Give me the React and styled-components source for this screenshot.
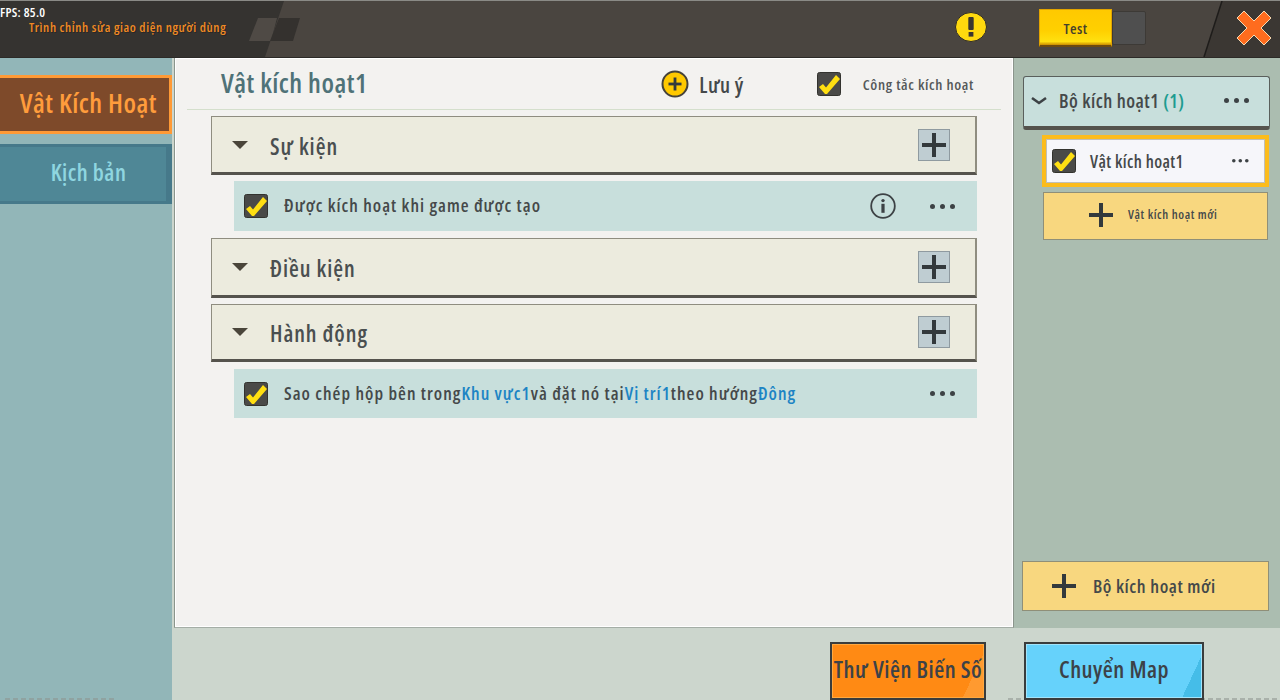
import React from 'react';
import styled, { createGlobalStyle } from 'styled-components';

const GlobalStyle = createGlobalStyle`
  html, body { margin: 0; height: 100%; overflow: hidden; }
  body { font-family: "Open Sans", "Noto Sans", sans-serif; font-stretch: 75%; font-weight: 600; letter-spacing: 0.03em; color: #45494a; }
  * { box-sizing: border-box; }
`;

const Page = styled.div`
  position: relative;
  width: 1280px;
  height: 700px;
  display: grid;
  grid-template-rows: 58px 570px 72px;
  grid-template-columns: 172px 1fr;
  background: #ccd6cd;
  overflow: hidden;
`;

const Header = styled.header`
  grid-column: 1 / 3;
  position: relative;
  display: flex;
  align-items: center;
  background: #4a4540;
  border-bottom: 1px solid #2c2a27;
  border-top: 1px solid #8a8a86;
`;

const HeaderArt = styled.svg`
  position: absolute;
  inset: 0;
`;

const Fps = styled.span`
  position: absolute;
  left: 0;
  top: 3px;
  font-size: 13px;
  line-height: 16px;
  letter-spacing: 0.3px;
  color: #fff;
`;

const HeaderTitle = styled.span`
  position: relative;
  margin: -4px 0 0 29px;
  font-size: 13px;
  letter-spacing: 0.58px;
  color: #f08a24;
  text-shadow: 1px 1px 0 #2a2724;
`;

const HeaderRight = styled.div`
  position: relative;
  margin: -2px 0 0 auto;
  display: flex;
  align-items: center;
  padding-right: 7px;
`;

const WarningSlot = styled.div`
  display: flex;
  margin-top: -2px;
`;

const Toggle = styled.div`
  display: flex;
  align-items: center;
  margin: 0 89px 0 52px;
`;

const ToggleOn = styled.div`
  width: 73px;
  height: 38px;
  display: flex;
  align-items: center;
  justify-content: center;
  font-size: 15px;
  color: #45402c;
  background: linear-gradient(180deg, #ffc900 0%, #ffd000 60%, #ffe010 90%, #c98a00 100%);
  border: 1px solid #e2a400;
  border-bottom: 2px solid #6b4a10;
`;

const ToggleOff = styled.div`
  width: 34px;
  height: 34px;
  background: #4f4f4f;
  border: 1px solid #3d3a36;
  border-radius: 2px;
`;

const Sidebar = styled.nav`
  grid-row: 2 / 4;
  background: #92b6b8;
  padding-top: 17px;
  display: flex;
  flex-direction: column;
  gap: 10px;
`;

const SideTab = styled.div`
  height: ${p => (p.$active ? 59 : 60)}px;
  display: flex;
  align-items: center;
  justify-content: ${p => (p.$active ? 'flex-end' : 'center')};
  padding: ${p => (p.$active ? '0 12px 4px 0' : '0 0 5px 11px')};
  white-space: nowrap;
  font-size: ${p => (p.$active ? 27 : 23)}px;
  color: ${p => (p.$active ? '#ff9c3c' : '#8fd6e0')};
  background: ${p => (p.$active ? '#7e4a2a' : '#4f8796')};
  border: ${p => (p.$active ? '3px solid #ff9a36' : '3px solid #46798a')};
  border-left: 0;
  border-right-width: ${p => (p.$active ? 3 : 6)}px;
`;

const Body = styled.div`
  display: grid;
  grid-template-columns: 842px 1fr;
`;

const Main = styled.main`
  margin-left: 2px;
  background: #f3f2f0;
  border: 1px solid #8b958c;
  border-top: 0;
  border-bottom-color: #a4aea6;
  box-shadow: inset 0 0 0 1px #fff;
  display: flex;
  flex-direction: column;
`;

const TitleRow = styled.div`
  height: 52px;
  margin: 0 12px;
  padding: 0 27px 0 34px;
  border-bottom: 1px solid #d4dfcc;
  display: flex;
  align-items: center;
`;

const Title = styled.h1`
  margin: -3px 0 0;
  font-size: 27px;
  font-weight: 600;
  color: #4f7278;
`;

const Note = styled.div`
  margin-left: auto;
  display: flex;
  align-items: center;
  gap: 10px;
  font-size: 21px;
  color: #45494a;
`;

const NoteLabel = styled.span`
  margin-top: 3px;
`;

const Switch = styled.div`
  margin-left: 73px;
  display: flex;
  align-items: center;
  gap: 22px;
  font-size: 15px;
  letter-spacing: 0.65px;
  color: #55595a;
`;

const Sections = styled.div`
  padding: 6px 36px 0 36px;
  display: flex;
  flex-direction: column;
`;

const SectionHead = styled.div`
  height: ${p => p.$h}px;
  margin-top: ${p => p.$top}px;
  padding: 0 25px 0 20px;
  display: flex;
  align-items: center;
  background: #ecebde;
  border: 1px solid #8f8d80;
  border-bottom: 3px solid #55534d;
  border-right-width: 2px;
`;

const Caret = styled.span`
  width: 0;
  height: 0;
  border-left: 8px solid transparent;
  border-right: 8px solid transparent;
  border-top: 8px solid #4a453a;
  margin-right: 22px;
`;

const SectionName = styled.span`
  margin-top: 3px;
  font-size: 22.5px;
  letter-spacing: 0.95px;
  color: #4a4f50;
`;

const AddBox = styled.div`
  margin-left: auto;
  width: 32px;
  height: 32px;
  display: flex;
  align-items: center;
  justify-content: center;
  background: #bfcdd2;
  border: 1px solid #8f9aa0;
`;

const Row = styled.div`
  height: ${p => p.$h}px;
  margin: ${p => p.$top}px 0 0 23px;
  padding: 0 22px 0 10px;
  display: flex;
  align-items: center;
  background: #c8dfdc;
  font-size: 18px;
  letter-spacing: 1.03px;
  color: #45494a;
`;

const RowText = styled.span`
  margin: -2px 0 0 16px;
`;

const Link = styled.span`
  color: #1c84c4;
`;

const RowEnd = styled.div`
  margin-left: auto;
  display: flex;
  align-items: center;
  gap: 34px;
`;

const Aside = styled.aside`
  background: #abbdb0;
  padding: 18px 11px 17px 9px;
  display: flex;
  flex-direction: column;
`;

const Group = styled.div`
  height: 54px;
  display: flex;
  align-items: center;
  padding: 0 20px 2px 6px;
  background: #c8dfdc;
  border: 1px solid #5a5f5c;
  border-bottom: 4px solid #55534d;
  border-radius: 3px;
  font-size: 19px;
  color: #45494a;
  margin-right: -1px;
`;

const GroupName = styled.span`
  margin-left: 11px;
`;

const Count = styled.span`
  color: #1d9c90;
`;

const Push = styled.div`
  margin-left: auto;
  display: flex;
`;

const Trigger = styled.div`
  height: 52px;
  margin: 5px 0 0 19px;
  padding: 0 16px 0 6px;
  display: flex;
  align-items: center;
  background: #f6f6fa;
  border: 4px solid #fcbc1c;
  box-shadow: inset 0 0 0 1px #c0bfb8;
  font-size: 17px;
  letter-spacing: 0.4px;
`;

const TriggerName = styled.span`
  margin-left: 14px;
`;

const NewButton = styled.div`
  flex: none;
  height: ${p => p.$h}px;
  margin: ${p => p.$margin};
  display: flex;
  align-items: center;
  padding: 0 0 ${p => p.$lift}px ${p => p.$pad}px;
  gap: ${p => p.$gap}px;
  font-size: ${p => p.$size}px;
  letter-spacing: 0.6px;
  color: #45494a;
  background: #f8d77f;
  border: 1px solid #8f8f78;
`;

const Footer = styled.footer`
  grid-column: 2;
  display: flex;
  justify-content: flex-end;
  align-items: flex-start;
  padding: 14px 76px 0 0;
  gap: 38px;
`;

const BigButton = styled.div`
  position: relative;
  z-index: 1;
  width: ${p => p.$w}px;
  height: 58px;
  display: flex;
  align-items: center;
  justify-content: center;
  padding-bottom: 4px;
  font-size: 23px;
  white-space: nowrap;
  color: #3c4248;
  border: 2px solid #3a3c3c;
  background: ${p => p.$bg};
  box-shadow: inset 0 0 0 1px ${p => p.$edge};
`;

const EdgeNoise = styled.div`
  position: absolute;
  bottom: 0;
  left: ${p => p.$left}px;
  width: ${p => p.$w}px;
  height: 2px;
  opacity: 0.55;
  background: repeating-linear-gradient(90deg, #8d938e 0 5px, transparent 5px 8px);
`;

const Check = () => (
  <svg width="24" height="24" viewBox="0 0 24 24">
    <rect x="0.5" y="0.5" width="23" height="23" rx="2" fill="#4a4a48" stroke="#33332f" />
    <path d="M2 15l4-3 3 3.5L19 3l4 4-13 15H8z" fill="#ffdf12" />
  </svg>
);

const Plus = ({ size = 24, width = 4, color = '#33393c' }) => (
  <svg width={size} height={size} viewBox="0 0 24 24">
    <rect x="0" y={12 - width / 2} width="24" height={width} fill={color} />
    <rect x={12 - width / 2} y="0" width={width} height="24" fill={color} />
  </svg>
);

const Dots = ({ gap = 10, r = 2.5 }) => (
  <svg width={gap * 2 + r * 2} height={r * 2} viewBox={`0 0 ${gap * 2 + r * 2} ${r * 2}`}>
    {[0, 1, 2].map(i => (
      <circle key={i} cx={r + i * gap} cy={r} r={r} fill="#3d4245" />
    ))}
  </svg>
);

const Info = () => (
  <svg width="26" height="26" viewBox="0 0 26 26">
    <circle cx="13" cy="13" r="11.8" fill="none" stroke="#3d4245" strokeWidth="1.8" />
    <circle cx="13" cy="7.6" r="1.7" fill="#3d4245" />
    <rect x="11.4" y="10.8" width="3.2" height="9" fill="#3d4245" />
  </svg>
);

const Warning = () => (
  <svg width="32" height="30" viewBox="0 0 32 30">
    <ellipse cx="16" cy="15" rx="15.5" ry="14.5" fill="#ffd90e" stroke="#2f2c29" />
    <rect x="13.3" y="5" width="5.4" height="13" rx="1" fill="#3a3630" />
    <rect x="13.6" y="20" width="4.8" height="4.6" fill="#3a3630" />
  </svg>
);

const Close = () => (
  <svg width="38" height="38" viewBox="0 0 38 38">
    <path
      d="M9 2L19 12 29 2 36 9 26 19 36 29 29 36 19 26 9 36 2 29 12 19 2 9z"
      fill="#ff6c1e"
      stroke="#f8d9b0"
      strokeWidth="1"
      strokeLinejoin="round"
    />
  </svg>
);

const PlusBadge = () => (
  <svg width="28" height="28" viewBox="0 0 28 28">
    <circle cx="14" cy="14" r="12.5" fill="#ffc900" stroke="#45423a" strokeWidth="2" />
    <rect x="7.5" y="12.6" width="13" height="2.8" fill="#33393c" />
    <rect x="12.6" y="7.5" width="2.8" height="13" fill="#33393c" />
  </svg>
);

const Chevron = () => (
  <svg width="18" height="10" viewBox="0 0 18 10">
    <path d="M2 2l7 5 7-5" fill="none" stroke="#3d4245" strokeWidth="2.6" />
  </svg>
);

export default function App() {
  return (
    <Page>
      <GlobalStyle />
      <Header>
        <HeaderArt width="1280" height="56" viewBox="0 0 1280 56">
          <path d="M0 0H284L265 56H0z" fill="#353330" />
          <path d="M258 17H277L271 40H249z" fill="#4f4a45" />
          <path d="M279 17H300L293 40H270z" fill="#34312e" />
          <path d="M1222 0H1280V56H1204z" fill="#3b3733" />
          <path d="M1222 0L1204 56" stroke="#1e1c1a" strokeWidth="1.5" />
        </HeaderArt>
        <Fps>FPS: 85.0</Fps>
        <HeaderTitle>Trình chỉnh sửa giao diện người dùng</HeaderTitle>
        <HeaderRight>
          <WarningSlot><Warning /></WarningSlot>
          <Toggle>
            <ToggleOn>Test</ToggleOn>
            <ToggleOff />
          </Toggle>
          <Close />
        </HeaderRight>
      </Header>
      <Sidebar>
        <SideTab $active>Vật Kích Hoạt</SideTab>
        <SideTab>Kịch bản</SideTab>
      </Sidebar>
      <Body>
        <Main>
          <TitleRow>
            <Title>Vật kích hoạt1</Title>
            <Note>
              <PlusBadge />
              <NoteLabel>Lưu ý</NoteLabel>
            </Note>
            <Switch>
              <Check />
              Công tắc kích hoạt
            </Switch>
          </TitleRow>
          <Sections>
            <SectionHead $h={59} $top={0}>
              <Caret />
              <SectionName>Sự kiện</SectionName>
              <AddBox><Plus /></AddBox>
            </SectionHead>
            <Row $h={50} $top={6}>
              <Check />
              <RowText>Được kích hoạt khi game được tạo</RowText>
              <RowEnd>
                <Info />
                <Dots />
              </RowEnd>
            </Row>
            <SectionHead $h={60} $top={7}>
              <Caret />
              <SectionName>Điều kiện</SectionName>
              <AddBox><Plus /></AddBox>
            </SectionHead>
            <SectionHead $h={58} $top={6}>
              <Caret />
              <SectionName>Hành động</SectionName>
              <AddBox><Plus /></AddBox>
            </SectionHead>
            <Row $h={49} $top={7}>
              <Check />
              <RowText>
                Sao chép hộp bên trong<Link>Khu vực1</Link>và đặt nó tại<Link>Vị trí1</Link>theo hướng<Link>Đông</Link>
              </RowText>
              <RowEnd>
                <Dots />
              </RowEnd>
            </Row>
          </Sections>
        </Main>
        <Aside>
          <Group>
            <Chevron />
            <GroupName>Bộ kích hoạt1 <Count>(1)</Count></GroupName>
            <Push><Dots /></Push>
          </Group>
          <Trigger>
            <Check />
            <TriggerName>Vật kích hoạt1</TriggerName>
            <Push><Dots gap={6.5} r={1.8} /></Push>
          </Trigger>
          <NewButton $h={48} $margin="5px 1px 0 20px" $pad={45} $gap={15} $size={12.5} $lift={3}>
            <Plus />
            Vật kích hoạt mới
          </NewButton>
          <NewButton $h={50} $margin="auto 0 0 -1px" $pad={29} $gap={17} $size={18.5} $lift={1}>
            <Plus />
            Bộ kích hoạt mới
          </NewButton>
        </Aside>
      </Body>
      <Footer>
        <BigButton
          $w={156}
          $bg="linear-gradient(115deg, #ff8a14 0 88%, #ff9a30 88%), linear-gradient(180deg, #ff8f1e, #ff8616 88%, #b8620f)"
          $edge="#ffa940"
        >
          Thư Viện Biến Số
        </BigButton>
        <BigButton
          $w={180}
          $bg="linear-gradient(115deg, #66d2fb 0 90%, #45bde8 90%)"
          $edge="#a2e4fb"
        >
          Chuyển Map
        </BigButton>
      </Footer>
      <EdgeNoise $left={5} $w={110} />
      <EdgeNoise $left={1008} $w={272} />
    </Page>
  );
}
